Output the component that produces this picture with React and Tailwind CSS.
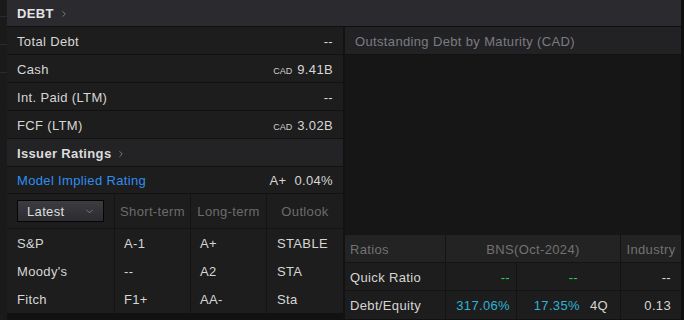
import React from 'react';
import { ChevronRight, ChevronDown } from 'lucide-react';

const topRows = [
  { label: 'Total Debt', value: '--' },
  { label: 'Cash', cur: 'CAD', value: '9.41B' },
  { label: 'Int. Paid (LTM)', value: '--' },
  { label: 'FCF (LTM)', cur: 'CAD', value: '3.02B' },
];

const ratings = [
  { agency: 'S&P', short: '--', long: 'A+', outlook: 'STABLE' },
  { agency: "Moody's", short: '--', long: 'A2', outlook: 'STA' },
  { agency: 'Fitch', short: 'F1+', long: 'AA-', outlook: 'Sta' },
];
ratings[0].short = 'A-1';

const App = () => {
  return (
    <div className="w-[684px] h-[320px] bg-[#111111] flex overflow-hidden font-['Liberation_Sans',Arial,sans-serif] text-[13px] tracking-[0.35px] text-[#d6d6d6]">
      {/* gutter gauche */}
      <div className="w-[7px] flex flex-col bg-[#1a1a1a]">
        <div className="h-[17px] border-b border-[#2a2a2a]" />
        <div className="h-[28px] border-b border-[#2a2a2a]" />
        <div className="h-[28px] border-b border-[#2a2a2a]" />
      </div>

      <div className="w-[674px] flex flex-col">
        {/* EN-TÊTE */}
        <div className="h-[27px] bg-[#2a2a2f] flex items-center pl-[10px] pt-[2px] gap-[5px] border-b border-[#0f0f0f]">
          <span className="font-bold text-[#e4e4e4]">DEBT</span>
          <ChevronRight size={10} strokeWidth={2} className="text-[#8a8a8a]" />
        </div>

        <div className="flex">
          {/* COLONNE GAUCHE */}
          <div className="w-[336px] flex flex-col">
            {topRows.map((r) => (
              <div key={r.label} className="h-[28px] bg-[#1d1d1d] border-b border-[#121212] flex items-center justify-between pt-[2px] pl-[10px] pr-[10px]">
                <span>{r.label}</span>
                <span className="flex items-baseline gap-[5px]">
                  {r.cur && <span className="text-[9px] tracking-normal text-[#d0d0d0]">{r.cur}</span>}
                  <span>{r.value}</span>
                </span>
              </div>
            ))}

            <div className="h-[28px] bg-[#232326] border-b border-[#121212] flex items-center pt-[2px] pl-[10px] gap-[5px]">
              <span className="font-bold text-[#dcdcdc]">Issuer Ratings</span>
              <ChevronRight size={10} strokeWidth={2} className="text-[#8a8a8a]" />
            </div>

            <div className="h-[27px] bg-[#1d1d1d] border-b border-[#121212] flex items-center justify-between pt-[2px] pl-[10px] pr-[10px]">
              <span className="text-[#2f8ff0]">Model Implied Rating</span>
              <span className="flex gap-[8px]">
                <span>A+</span>
                <span>0.04%</span>
              </span>
            </div>

            {/* TABLEAU NOTATIONS */}
            <div className="bg-[#1d1d1d] flex flex-col">
              <div className="h-[35px] flex border-b border-[#141414]">
                <div className="w-[107px] flex items-center pl-[10px]">
                  <div className="w-[87px] h-[22px] bg-gradient-to-b from-[#3c3c41] to-[#2c2c30] border border-[#050505] flex items-center justify-between pt-[1px] pl-[9px] pr-[8px]">
                    <span className="text-[#dedede]">Latest</span>
                    <ChevronDown size={11} strokeWidth={1.5} className="text-[#9a9a9a]" />
                  </div>
                </div>
                <div className="w-[76px] border-l border-[#141414] flex items-center justify-center pt-[2px] text-[#6c6c6c]">Short-term</div>
                <div className="w-[76px] border-l border-[#141414] flex items-center justify-center pt-[2px] text-[#6c6c6c]">Long-term</div>
                <div className="flex-1 border-l border-[#141414] flex items-center justify-center pt-[2px] text-[#6c6c6c]">Outlook</div>
              </div>
              {ratings.map((r) => (
                <div key={r.agency} className="h-[28px] flex">
                  <div className="w-[107px] flex items-center pt-[2px] pl-[10px]">{r.agency}</div>
                  <div className="w-[76px] border-l border-[#141414] flex items-center pt-[2px] pl-[9px]">{r.short}</div>
                  <div className="w-[76px] border-l border-[#141414] flex items-center pt-[2px] pl-[9px]">{r.long}</div>
                  <div className="flex-1 border-l border-[#141414] flex items-center pt-[2px] pl-[10px]">{r.outlook}</div>
                </div>
              ))}
            </div>
          </div>

          <div className="w-[2px] bg-[#121212]" />

          {/* COLONNE DROITE */}
          <div className="w-[336px] flex flex-col">
            <div className="h-[28px] bg-[#222225] border-b border-[#121212] flex items-center pt-[2px] pl-[10px] text-[#7a7c82]">
              Outstanding Debt by Maturity (CAD)
            </div>
            <div className="h-[180px] bg-[#161616]" />

            {/* RATIOS */}
            <div className="flex flex-col bg-[#1d1d1d]">
              <div className="h-[28px] flex bg-[#232323] border-b border-[#141414] text-[#727272]">
                <div className="w-[100px] flex items-center pt-[2px] pl-[5px]">Ratios</div>
                <div className="w-[175px] border-l border-[#141414] flex items-center justify-center pt-[2px]">BNS(Oct-2024)</div>
                <div className="flex-1 border-l border-[#141414] flex items-center justify-center pt-[2px]">Industry</div>
              </div>
              <div className="h-[28px] flex border-b border-[#141414]">
                <div className="w-[100px] flex items-center pt-[2px] pl-[5px]">Quick Ratio</div>
                <div className="w-[71px] border-l border-[#141414] flex items-center justify-end pt-[2px] pr-[6px] text-[#33d14a]">--</div>
                <div className="w-[104px] border-l border-[#141414] flex items-center justify-end pt-[2px] pr-[42px] text-[#33d14a]">--</div>
                <div className="flex-1 border-l border-[#141414] flex items-center justify-end pt-[2px] pr-[10px]">--</div>
              </div>
              <div className="h-[28px] flex">
                <div className="w-[100px] flex items-center pt-[2px] pl-[5px]">Debt/Equity</div>
                <div className="w-[71px] border-l border-[#141414] flex items-center justify-end pt-[2px] pr-[6px] text-[#2db4d6]">317.06%</div>
                <div className="w-[104px] border-l border-[#141414] flex items-center justify-end pt-[2px] pr-[12px] gap-[10px]">
                  <span className="text-[#2db4d6]">17.35%</span>
                  <span>4Q</span>
                </div>
                <div className="flex-1 border-l border-[#141414] flex items-center justify-end pt-[2px] pr-[10px]">0.13</div>
              </div>
            </div>
          </div>
        </div>
      </div>

      <div className="w-[3px] bg-[#0f0f0f]" />
    </div>
  );
};

export default App;
